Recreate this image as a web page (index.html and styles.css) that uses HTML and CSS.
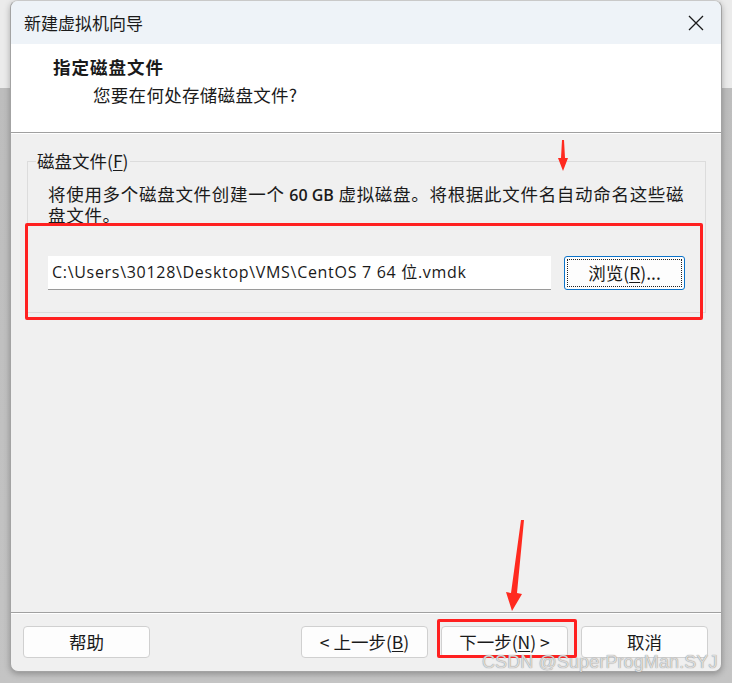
FILE: index.html
```html
<!DOCTYPE html>
<html lang="zh-CN">
<head>
<meta charset="utf-8">
<title>新建虚拟机向导</title>
<link rel="stylesheet" href="styles.css">
</head>
<body>
<div class="screen">
  <div class="window">
    <div class="titlebar">
      <span class="title">新建虚拟机向导</span>
      <svg class="close" width="16" height="16" viewBox="0 0 16 16"><path d="M1 1 L15 15 M15 1 L1 15" stroke="#1a1a1a" stroke-width="1.3" fill="none"/></svg>
    </div>
    <div class="header">
      <div class="h-title">指定磁盘文件</div>
      <div class="h-sub">您要在何处存储磁盘文件?</div>
    </div>
    <div class="content">
      <fieldset class="group">
        <legend>磁盘文件(<u>F</u>)</legend>
        <p class="desc">将使用多个磁盘文件创建一个 <span class="num">60 GB</span> 虚拟磁盘。将根据此文件名自动命名这些磁<br>盘文件。</p>
        <div class="row">
          <div class="input">C:\Users\30128\Desktop\VMS\CentOS 7 64 位.vmdk</div>
          <button class="btn browse"><span class="focus">浏览(<u>R</u>)...</span></button>
        </div>
      </fieldset>
    </div>
    <div class="footer">
      <button class="btn">帮助</button>
      <div class="spacer"></div>
      <button class="btn">&lt; 上一步(<u>B</u>)</button>
      <button class="btn">下一步(<u>N</u>) &gt;</button>
      <button class="btn">取消</button>
    </div>
  </div>

  <div class="mark mark-path"></div>
  <div class="mark mark-next"></div>
  <svg class="arrows" width="732" height="683" viewBox="0 0 732 683">
    <path d="M562 140 L564 140 L565 158 L568 158 L563 171 L558 158 L561 158 Z" fill="#ff2a1f"/>
    <path d="M521 520 L524 520 L517 593 L522 594 L512 611 L506 592 L511 593 Z" fill="#ff2a1f"/>
  </svg>
  <div class="watermark">CSDN @SuperProgMan.SYJ</div>
</div>
</body>
</html>
```
FILE: styles.css
```css
* { box-sizing: border-box; }
html, body { margin: 0; padding: 0; }
body {
  width: 732px;
  height: 683px;
  overflow: hidden;
  font-family: "Noto Sans CJK SC", "Noto Sans", sans-serif;
  color: #1a1a1a;
}
.screen {
  position: relative;
  width: 732px;
  height: 683px;
  background: linear-gradient(to bottom, #ebebeb 0, #ebebeb 88px, #bdbdbd 88px, #c4c4c4 100%);
  padding: 0 10px 0 10px;
}
.window {
  width: 712px;
  height: 672px;
  border: 1px solid #a3a3a3;
  border-top-color: #c9c9c9;
  border-radius: 8px;
  overflow: hidden;
  display: flex;
  flex-direction: column;
  background: #f0f0f0;
  box-shadow: 0 2px 6px rgba(0,0,0,0.28);
}
.titlebar {
  height: 43px;
  flex: none;
  background: #eef3f8;
  display: flex;
  align-items: center;
  justify-content: space-between;
  padding: 0 17px 0 13px;
}
.title { font-size: 17px; line-height: 20px; }
.close { display: block; width: 16px; height: 16px; }
.header {
  height: 89px;
  flex: none;
  background: #ffffff;
  padding: 10px 0 0 42px;
  border-bottom: 1px solid #a0a0a0;
  box-shadow: 0 1px 0 #ffffff;
  margin-bottom: 1px;
}
.h-title { font-size: 17.5px; font-weight: 700; line-height: 26px; letter-spacing: 1px; }
.h-sub { font-size: 17.5px; line-height: 26px; margin: 2px 0 0 40px; letter-spacing: 0.3px; }
.content {
  flex: 1;
  padding: 16px 15px 0 16px;
  background: #f0f0f0;
}
.group {
  margin: 0;
  border: 1px solid #dcdcdc;
  padding: 12px 18px 22px 20px;
  min-width: 0;
}
.group legend {
  font-size: 17.5px;
  line-height: 22px;
  padding: 0 1px;
  margin-left: -12px;
}
.group u, .btn u { text-decoration: underline; text-underline-offset: 2px; }
.desc {
  margin: 0;
  font-size: 17.5px;
  line-height: 20px;
  letter-spacing: 0.7px;
  white-space: nowrap;
}
.num { font-family: "Open Sans", "Noto Sans", sans-serif; font-weight: 600; font-size: 16px; letter-spacing: 0; }
.row {
  display: flex;
  gap: 13px;
  margin-top: 31px;
  margin-right: 2px;
  height: 34px;
}
.input {
  flex: 1;
  background: #ffffff;
  border-bottom: 1px solid #9a9a9a;
  font-family: "Open Sans", "Noto Sans", "Noto Sans CJK SC", sans-serif;
  font-size: 16px;
  line-height: 32px;
  padding: 0 4px;
  white-space: nowrap;
  letter-spacing: 0.7px;
}
.btn {
  width: 127px;
  height: 32px;
  flex: none;
  background: #fdfdfd;
  border: 1px solid #d0d0d0;
  border-radius: 4px;
  font-family: "Noto Sans CJK SC", "Noto Sans", sans-serif;
  font-size: 17.5px;
  color: #1a1a1a;
  padding: 0;
  line-height: 30px;
}
.browse {
  width: 121px;
  height: 34px;
  border: 1px solid #0a72c9;
  border-radius: 3px;
  padding: 2px;
}
.browse .focus {
  display: block;
  height: 100%;
  border: 1px dotted #222;
  line-height: 26px;
}
.footer {
  flex: none;
  height: 59px;
  border-top: 1px solid #a0a0a0;
  box-shadow: inset 0 1px 0 #ffffff;
  display: flex;
  gap: 13px;
  padding: 13px 13px 0 12px;
}
.spacer { flex: 1; }
.mark {
  position: absolute;
  border: 3px solid #ff2020;
  border-radius: 2px;
}
.mark-path { left: 25px; top: 223px; width: 678px; height: 97px; }
.mark-next { left: 437px; top: 619px; width: 140px; height: 39px; }
.arrows { position: absolute; left: 0; top: 0; pointer-events: none; }
.watermark {
  position: absolute;
  left: 482px;
  top: 651px;
  font-family: "Liberation Sans", Arial, sans-serif;
  font-size: 18px;
  line-height: 22px;
  letter-spacing: 0.1px;
  color: rgba(236,236,236,0.85);
  text-shadow: 0 0 1px #6a6a6a;
  white-space: nowrap;
}
```
